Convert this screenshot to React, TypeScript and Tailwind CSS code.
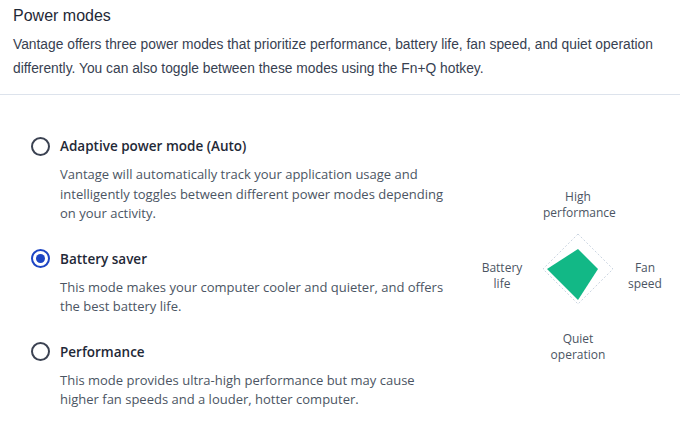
import React from 'react'

type Mode = {
  title: string
  desc: string
  selected?: boolean
}

const modes: Mode[] = [
  {
    title: 'Adaptive power mode (Auto)',
    desc: 'Vantage will automatically track your application usage and intelligently toggles between different power modes depending on your activity.',
  },
  {
    title: 'Battery saver',
    desc: 'This mode makes your computer cooler and quieter, and offers the best battery life.',
    selected: true,
  },
  {
    title: 'Performance',
    desc: 'This mode provides ultra-high performance but may cause higher fan speeds and a louder, hotter computer.',
  },
]

function Radio({ checked }: { checked?: boolean }) {
  if (checked) {
    return (
      <span className="flex h-[19px] w-[19px] shrink-0 items-center justify-center rounded-full border-2 border-[#1d45c4]">
        <span className="h-[9px] w-[9px] rounded-full bg-[#1d45c4]" />
      </span>
    )
  }
  return <span className="h-[19px] w-[19px] shrink-0 rounded-full border-2 border-[#3b4252]" />
}

function Chart() {
  return (
    <div className="grid w-[200px] grid-cols-[70px_70px_60px] grid-rows-[auto_80px_auto] items-center text-center text-[12px] leading-[16px] text-[#4b5563]">
      <div />
      <div className="self-end pb-2">High<br />performance</div>
      <div />
      <div className="pr-3 pt-[14px]">Battery<br />life</div>
      <svg width="80" height="80" viewBox="0 0 80 80" className="-ml-[5px]">
        <polygon points="40,5 75,40 40,75 5,40" fill="none" stroke="#cbd5e1" strokeWidth="1" strokeDasharray="2 2" />
        <polygon points="40,20 60,40 40,71 9,40" fill="#12b886" />
      </svg>
      <div className="pl-1 pt-[14px]">Fan<br />speed</div>
      <div />
      <div className="self-start pt-[22px]">Quiet<br />operation</div>
      <div />
    </div>
  )
}

export default function App() {
  return (
    <div className="min-h-[437px] w-[680px] bg-white" style={{ fontFamily: '"Liberation Sans", sans-serif' }}>
      <div className="px-[13px] pt-[4px] pb-[13px]">
        <h1 className="text-[16px] font-medium leading-[24px] text-[#1f2937]">Power modes</h1>
        <p className="mt-[5px] text-[13.8px] leading-[24px] text-[#374151]">
          Vantage offers three power modes that prioritize performance, battery life, fan speed, and quiet operation
          differently. You can also toggle between these modes using the Fn+Q hotkey.
        </p>
      </div>
      <div className="h-px bg-[#dde3ec]" />
      <div className="flex items-center pl-[31px] pt-[41px]">
        <div className="flex w-[417px] shrink-0 flex-col gap-[25px]" style={{ fontFamily: '"Open Sans", sans-serif' }}>
          {modes.map((m) => (
            <div key={m.title}>
              <div className="flex items-center gap-[10px]">
                <Radio checked={m.selected} />
                <span className="text-[13.5px] font-semibold leading-[20px] text-[#1f2937]">{m.title}</span>
              </div>
              <p className="mt-[9px] pl-[29px] text-[13px] leading-[19.5px] text-[#4b5563]">{m.desc}</p>
            </div>
          ))}
        </div>
        <div className="ml-[25px] mt-[6px] shrink-0" style={{ fontFamily: '"Open Sans", sans-serif' }}>
          <Chart />
        </div>
      </div>
    </div>
  )
}
